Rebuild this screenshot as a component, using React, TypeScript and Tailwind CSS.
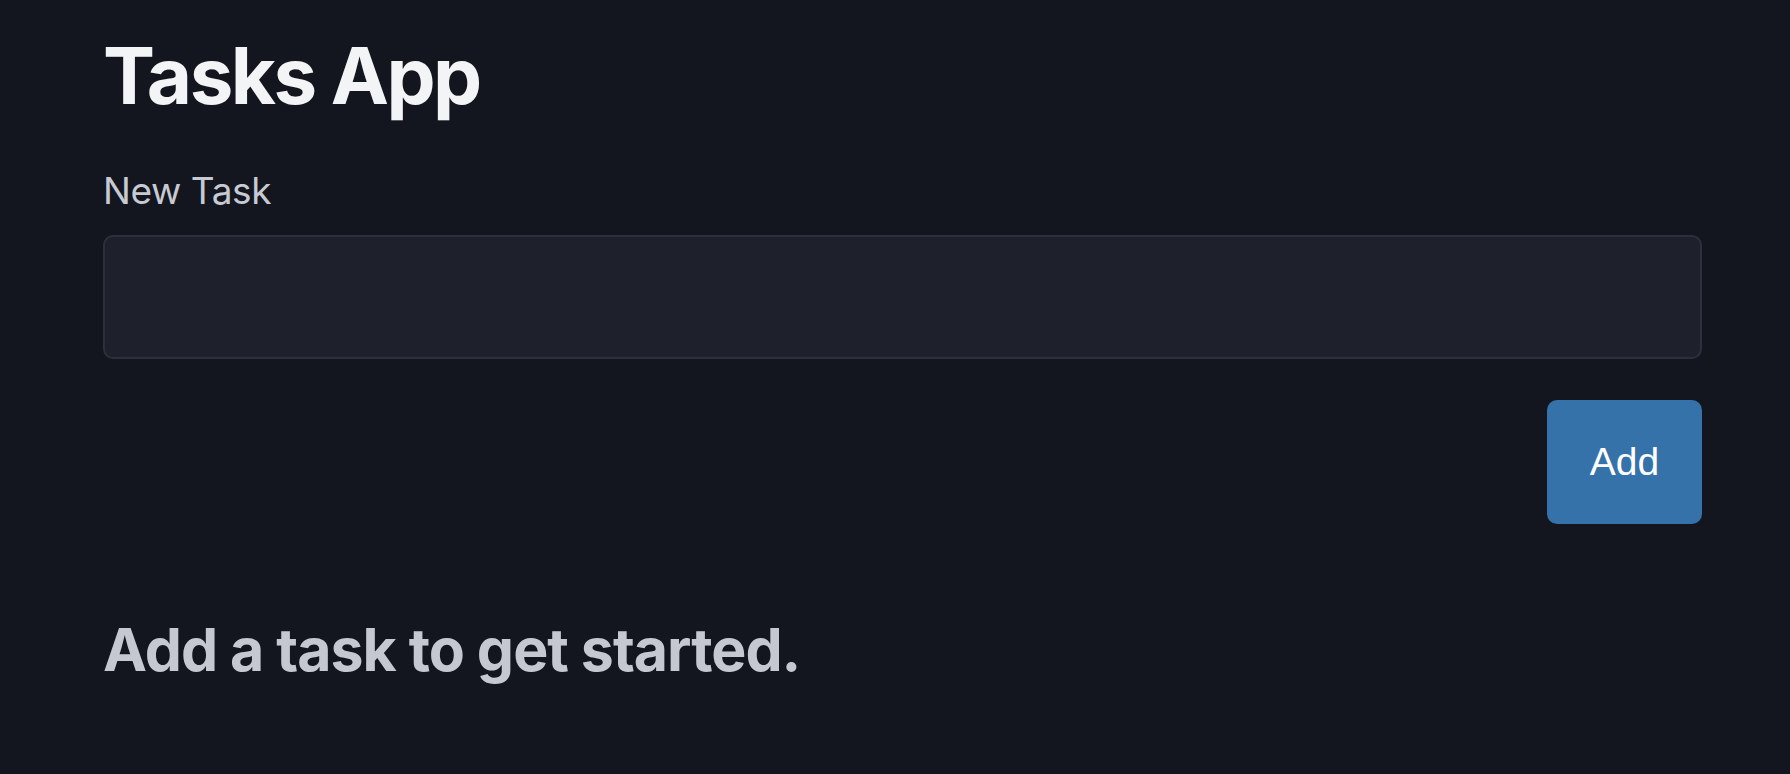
import React from "react";

export default function App() {
  return (
    <div
      className="min-h-[774px] w-full bg-[#13161e] pl-[103px] pr-[88px] pt-[37px]"
      style={{ fontFamily: "Inter, 'Noto Sans', sans-serif" }}
    >
      <h1 className="text-[78px] leading-[78px] font-bold text-[#f3f4f6] tracking-[-2.5px]">
        Tasks App
      </h1>
      <label className="mt-[57px] block text-[37px] leading-[37px] text-[#c7cad3] tracking-[-0.4px]">
        New Task
      </label>
      <input
        type="text"
        className="mt-[26px] block h-[124px] w-full rounded-[10px] border-2 border-[#2c303c] bg-[#1e212b] px-4 text-[37px] text-gray-100 outline-none"
      />
      <div className="mt-[41px] flex justify-end">
        <button
          className="h-[124px] w-[155px] rounded-[10px] bg-[#3572a9] text-[39px] text-white"
          style={{ fontFamily: "'Liberation Sans', Arial, sans-serif" }}
        >
          Add
        </button>
      </div>
      <p className="mt-[96px] text-[59px] leading-[59px] font-bold text-[#c5c8d1] tracking-[-1px]">
        Add a task to get started.
      </p>
    </div>
  );
}
